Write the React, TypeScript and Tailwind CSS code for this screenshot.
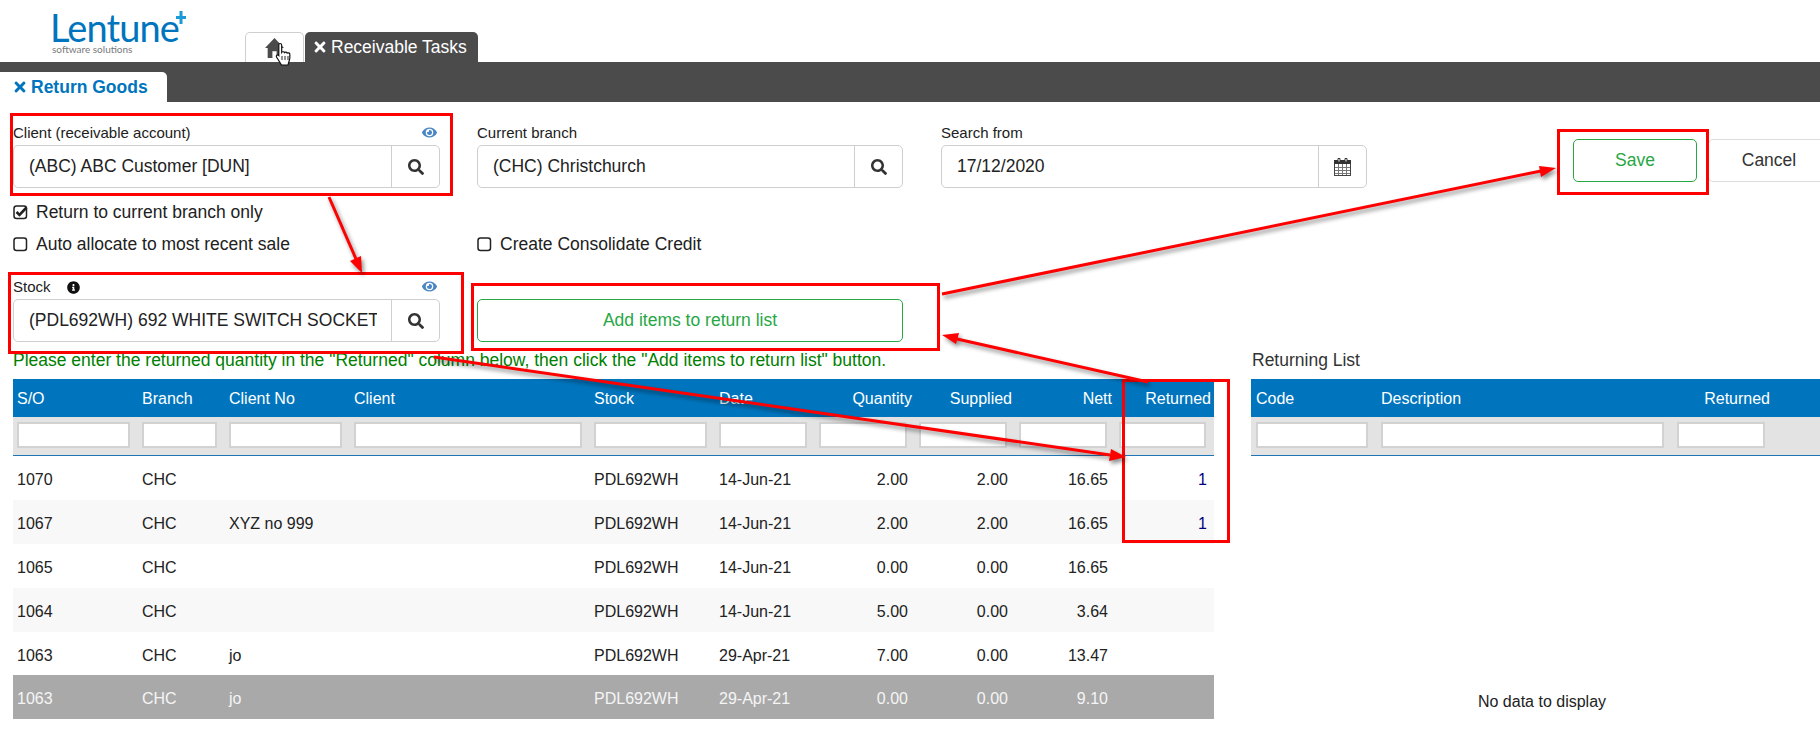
import { FaEye, FaInfoCircle, FaSearch, FaTimes } from "react-icons/fa";

const GROUP_BOXES = [
  "left-[10px] top-[113px] h-[83px] w-[443px]",
  "left-[8px] top-[272px] h-[82px] w-[456px]",
  "left-[471px] top-[283px] h-[68px] w-[469px]",
  "left-[1557px] top-[129px] h-[66px] w-[152px]",
  "left-[1122px] top-[379px] h-[164px] w-[108px]",
];

const salesColumns = [
  { label: "S/O", cell: "w-[125px]" },
  { label: "Branch", cell: "w-[87px]" },
  { label: "Client No", cell: "w-[125px]" },
  { label: "Client", cell: "w-[240px]" },
  { label: "Stock", cell: "w-[125px]" },
  { label: "Date", cell: "w-[100px]" },
  { label: "Quantity", cell: "w-[100px]", right: true },
  { label: "Supplied", cell: "w-[100px]", right: true },
  { label: "Nett", cell: "w-[100px]", right: true },
  { label: "Returned", cell: "w-[99px]", right: true },
];

const salesRows = [
  ["1070", "CHC", "", "", "PDL692WH", "14-Jun-21", "2.00", "2.00", "16.65", "1"],
  ["1067", "CHC", "XYZ no 999", "", "PDL692WH", "14-Jun-21", "2.00", "2.00", "16.65", "1"],
  ["1065", "CHC", "", "", "PDL692WH", "14-Jun-21", "0.00", "0.00", "16.65", ""],
  ["1064", "CHC", "", "", "PDL692WH", "14-Jun-21", "5.00", "0.00", "3.64", ""],
  ["1063", "CHC", "jo", "", "PDL692WH", "29-Apr-21", "7.00", "0.00", "13.47", ""],
  ["1063", "CHC", "jo", "", "PDL692WH", "29-Apr-21", "0.00", "0.00", "9.10", ""],
];

const returnColumns = [
  { label: "Code", cell: "w-[126px] pl-[5px]", right: false },
  { label: "Description", cell: "w-[296px] pl-1", right: false },
  { label: "Returned", cell: "w-[101px] pl-1", right: true },
];

function Logo() {
  return (
    <div className="relative h-[62px] w-[245px] shrink-0 pl-[50px]">
      <div className="pt-[10px] font-['Lato',sans-serif] text-[38px] leading-[34px] font-normal tracking-[-0.9px] text-[#0075be]">
        Lentune
      </div>
      <div className="pl-[2px] font-['Lato',sans-serif] text-[10px] leading-[10px] text-[#77797b]">
        software solutions
      </div>
      <svg className="absolute top-[11px] left-[176px]" width="10" height="13" viewBox="0 0 10 13">
        <path d="M3.500 0h3v5H10v3H6.500v5h-3V8H0V5h3.500Z" fill="#1a9ad6" />
      </svg>
    </div>
  );
}

function LookupField({
  label,
  value,
  icon,
  eye,
  info,
  widthClass,
}: {
  label: string;
  value: string;
  icon: React.ReactNode;
  eye?: boolean;
  info?: boolean;
  widthClass: string;
}) {
  return (
    <div className={`shrink-0 ${widthClass}`}>
      <div className="flex h-[21px] items-center pb-[3px] text-[15px] leading-[18px] text-[#212121]">
        <span>{label}</span>
        {info && <FaInfoCircle className="ml-[16px] text-[13px] text-[#111]" />}
        {eye && <FaEye className="mt-[-2px] mr-[3px] ml-auto text-[15px] text-[#4a86c4]" />}
      </div>
      <div className="flex h-[43px] overflow-hidden rounded-[5px] border border-[#cfcfcf] bg-white">
        <div className="min-w-0 flex-1 pr-[14px] pl-[15px]">
          <div className="overflow-hidden text-[17.5px] leading-[41px] whitespace-nowrap text-[#222]">{value}</div>
        </div>
        <div className="flex w-[48px] shrink-0 items-center justify-center border-l border-[#cfcfcf] text-[16px] text-[#333]">
          {icon}
        </div>
      </div>
    </div>
  );
}

function CheckBox({ checked }: { checked?: boolean }) {
  return (
    <svg width="15" height="16" viewBox="0 0 15 16" className="shrink-0">
      <rect x="1" y="2" width="12.500" height="12.500" rx="2.500" fill="#fff" stroke="#222" strokeWidth="1.500" />
      {checked && <path d="M3.500 8l3 3L13.500 3.500" fill="none" stroke="#222" strokeWidth="2.600" />}
    </svg>
  );
}

function CheckRow({ label, checked }: { label: string; checked?: boolean }) {
  return (
    <div className="flex h-[20px] items-center text-[17.5px] text-[#212121]">
      <CheckBox checked={checked} />
      <span className="ml-[8px]">{label}</span>
    </div>
  );
}

function CalendarIcon() {
  return (
    <svg width="17" height="18" viewBox="0 0 17 18">
      <rect x="0.500" y="2.500" width="16" height="15" fill="#fff" stroke="#444" />
      <rect x="0" y="2" width="17" height="4" fill="#333" />
      <path d="M4 .5h2v3.500H4zM11 .5h2v3.500h-2z" fill="#fff" stroke="#333" />
      <path d="M1 9.500h15M1 12.500h15M1 15.500h15M4.500 6v11M8.500 6v11M12.500 6v11" stroke="#777" strokeWidth="1" />
    </svg>
  );
}

function HomeIcon() {
  return (
    <svg width="19" height="20" viewBox="0 0 18 19">
      <path d="M9 0 18 9.500 15.500 9.500V19H11V12.500H7V19H2.500V9.500H0Z" fill="#4b4b4b" />
    </svg>
  );
}

function FilterInput() {
  return <input className="h-[26px] w-full border-2 border-[#d2d2d2] bg-white outline-none" />;
}

function SalesTable() {
  return (
    <div className="ml-[13px] w-[1201px] shrink-0">
      <div className="flex h-[38px] items-center bg-[#0075be] pt-[2px] text-[16px] text-white">
        {salesColumns.map((col) => (
          <div
            key={col.label}
            className={`shrink-0 ${col.cell} ${col.right ? "pr-[3px] text-right" : "pl-1"}`}
          >
            {col.label}
          </div>
        ))}
      </div>
      <div className="flex h-[39px] items-start border-b border-[#1d75b5] bg-[#e3e3e3] pt-[5px]">
        {salesColumns.map((col) => (
          <div key={col.label} className={`shrink-0 ${col.cell} pr-[8px] pl-1`}>
            <FilterInput />
          </div>
        ))}
      </div>
      {salesRows.map((row, i) => {
        const sold = i === salesRows.length - 1;
        return (
          <div
            key={i}
            className={`flex items-center pt-[4px] text-[16px] ${i === 4 ? "h-[43px]" : "h-[44px]"} ${
              sold ? "bg-[#a9a9a9] text-[#f5f5f5]" : i % 2 === 1 ? "bg-[#f8f8f8] text-[#222]" : "bg-white text-[#222]"
            }`}
          >
            {row.map((value, c) => {
              const col = salesColumns[c];
              return (
                <div
                  key={col.label}
                  className={`shrink-0 ${col.cell} ${col.right ? "pr-[7px] text-right" : "pl-1"} ${
                    c === 9 ? "text-[#000080]" : ""
                  }`}
                >
                  {value}
                </div>
              );
            })}
          </div>
        );
      })}
    </div>
  );
}

function ReturningTable() {
  return (
    <div className="ml-[37px] w-[582px] shrink-0">
      <div className="flex h-[38px] items-center bg-[#0075be] pt-[2px] text-[16px] text-white">
        {returnColumns.map((col) => (
          <div key={col.label} className={`shrink-0 ${col.cell} ${col.right ? "pr-[4px] text-right" : ""}`}>
            {col.label}
          </div>
        ))}
      </div>
      <div className="flex h-[39px] items-start border-b border-[#1d75b5] bg-[#e3e3e3] pt-[5px]">
        {returnColumns.map((col) => (
          <div key={col.label} className={`shrink-0 ${col.cell} pr-[9px]`}>
            <FilterInput />
          </div>
        ))}
      </div>
      <div className="pt-[236px] text-center text-[16px] leading-[20px] text-[#222]">No data to display</div>
    </div>
  );
}

// red annotations drawn on top of the form
function Annotations() {
  const arrows = [
    { line: "M329 197L356 259", head: "M362 273L350 261L361 256Z" },
    { line: "M942 294L1541 171", head: "M1556 168L1541 177L1539 166Z" },
    { line: "M1148 382L957 339", head: "M942 335L959 333L956 344Z" },
    { line: "M434 357L1110 455", head: "M1126 457L1109 461L1111 449Z" },
  ];
  return (
    <>
      {GROUP_BOXES.map((box) => (
        <div key={box} className={`pointer-events-none absolute border-[3px] border-[#ff0000] ${box}`} />
      ))}
      <svg className="pointer-events-none absolute top-0 left-0" width="1820" height="732">
        {arrows.map((a) => (
          <g key={a.line} className="drop-shadow-[2px_3px_2px_rgba(0,0,0,0.45)]">
            <path d={a.line} stroke="#ff0000" strokeWidth="3" fill="none" />
            <path d={a.head} fill="#ff0000" />
          </g>
        ))}
      </svg>
    </>
  );
}

export default function App() {
  return (
    <div className="relative h-[732px] w-[1820px] overflow-hidden bg-white font-['Liberation_Sans',Arial,sans-serif] text-[16px]">
      <div className="flex h-[62px] items-end">
        <Logo />
        <div className="flex h-[30px] w-[59px] items-center justify-center rounded-t-[5px] border border-b-0 border-[#cfcfcf] bg-white">
          <HomeIcon />
        </div>
        <div className="ml-[1px] flex h-[30px] w-[173px] items-center rounded-t-[5px] bg-[#4b4b4b] pl-[7px] text-[17.5px] text-white">
          <FaTimes className="text-[16px]" />
          <span className="ml-[3px]">Receivable Tasks</span>
        </div>
      </div>
      <div className="flex h-[40px] items-end bg-[#4b4b4b]">
        <div className="flex h-[30px] w-[167px] items-center rounded-tr-[5px] bg-white pl-[12px] text-[17.5px] font-bold text-[#0075be]">
          <FaTimes className="text-[16px]" />
          <span className="ml-[3px]">Return Goods</span>
        </div>
      </div>

      <div className="mt-[22px] flex items-start pl-[13px]">
        <LookupField
          label="Client (receivable account)"
          value="(ABC) ABC Customer [DUN]"
          icon={<FaSearch />}
          eye
          widthClass="w-[427px]"
        />
        <div className="ml-[37px]">
          <LookupField label="Current branch" value="(CHC) Christchurch" icon={<FaSearch />} widthClass="w-[426px]" />
        </div>
        <div className="ml-[38px]">
          <LookupField label="Search from" value="17/12/2020" icon={<CalendarIcon />} widthClass="w-[426px]" />
        </div>
        <div className="mt-[15px] ml-[206px] flex text-[17.5px]">
          <button className="h-[43px] w-[124px] rounded-[5px] border border-[#28a745] bg-white text-[#28a745]">
            Save
          </button>
          <button className="ml-[11px] h-[43px] w-[122px] shrink-0 rounded-[5px] border border-[#dcdcdc] bg-white text-[#333]">
            Cancel
          </button>
        </div>
      </div>

      <div className="mt-[14px] pl-[13px]">
        <CheckRow label="Return to current branch only" checked />
      </div>
      <div className="mt-[12px] flex pl-[13px]">
        <div className="w-[464px]">
          <CheckRow label="Auto allocate to most recent sale" />
        </div>
        <CheckRow label="Create Consolidate Credit" />
      </div>

      <div className="mt-[24px] flex items-end pl-[13px]">
        <LookupField
          label="Stock"
          value="(PDL692WH) 692 WHITE SWITCH SOCKET"
          icon={<FaSearch />}
          eye
          info
          widthClass="w-[427px]"
        />
        <button className="ml-[37px] h-[43px] w-[426px] rounded-[5px] border border-[#28a745] bg-white text-[17.5px] text-[#28a745]">
          Add items to return list
        </button>
      </div>

      <div className="mt-[8px] flex h-[20px] items-center">
        <div className="w-[1252px] shrink-0 pl-[13px] text-[17.5px] text-[#008000]">
          Please enter the returned quantity in the "Returned" column below, then click the "Add items to return list"
          button.
        </div>
        <div className="text-[17.5px] text-[#333]">Returning List</div>
      </div>

      <div className="mt-[9px] flex">
        <SalesTable />
        <ReturningTable />
      </div>

      <Annotations />
      <svg className="pointer-events-none absolute top-[42px] left-[275px]" width="19" height="25" viewBox="0 0 19 25">
        <path
          d="M5 1.500c1 0 1.700.8 1.700 1.800v7c.5-.8 2.400-.8 2.800.3.600-.7 2.300-.6 2.700.5.800-.6 2.400-.2 2.600 1 .2 2.200.2 4.600-.5 6.400l-1.300 4.500H6.500L1.500 15c-.8-1.200 1-2.800 2.300-1.500V3.300C3.800 2.300 4 1.500 5 1.500Z"
          fill="#fff"
          stroke="#111"
          strokeWidth="1.200"
        />
        <path d="M7 14v4M10 14v4M13 14v4" stroke="#111" strokeWidth="0.900" />
      </svg>
    </div>
  );
}
